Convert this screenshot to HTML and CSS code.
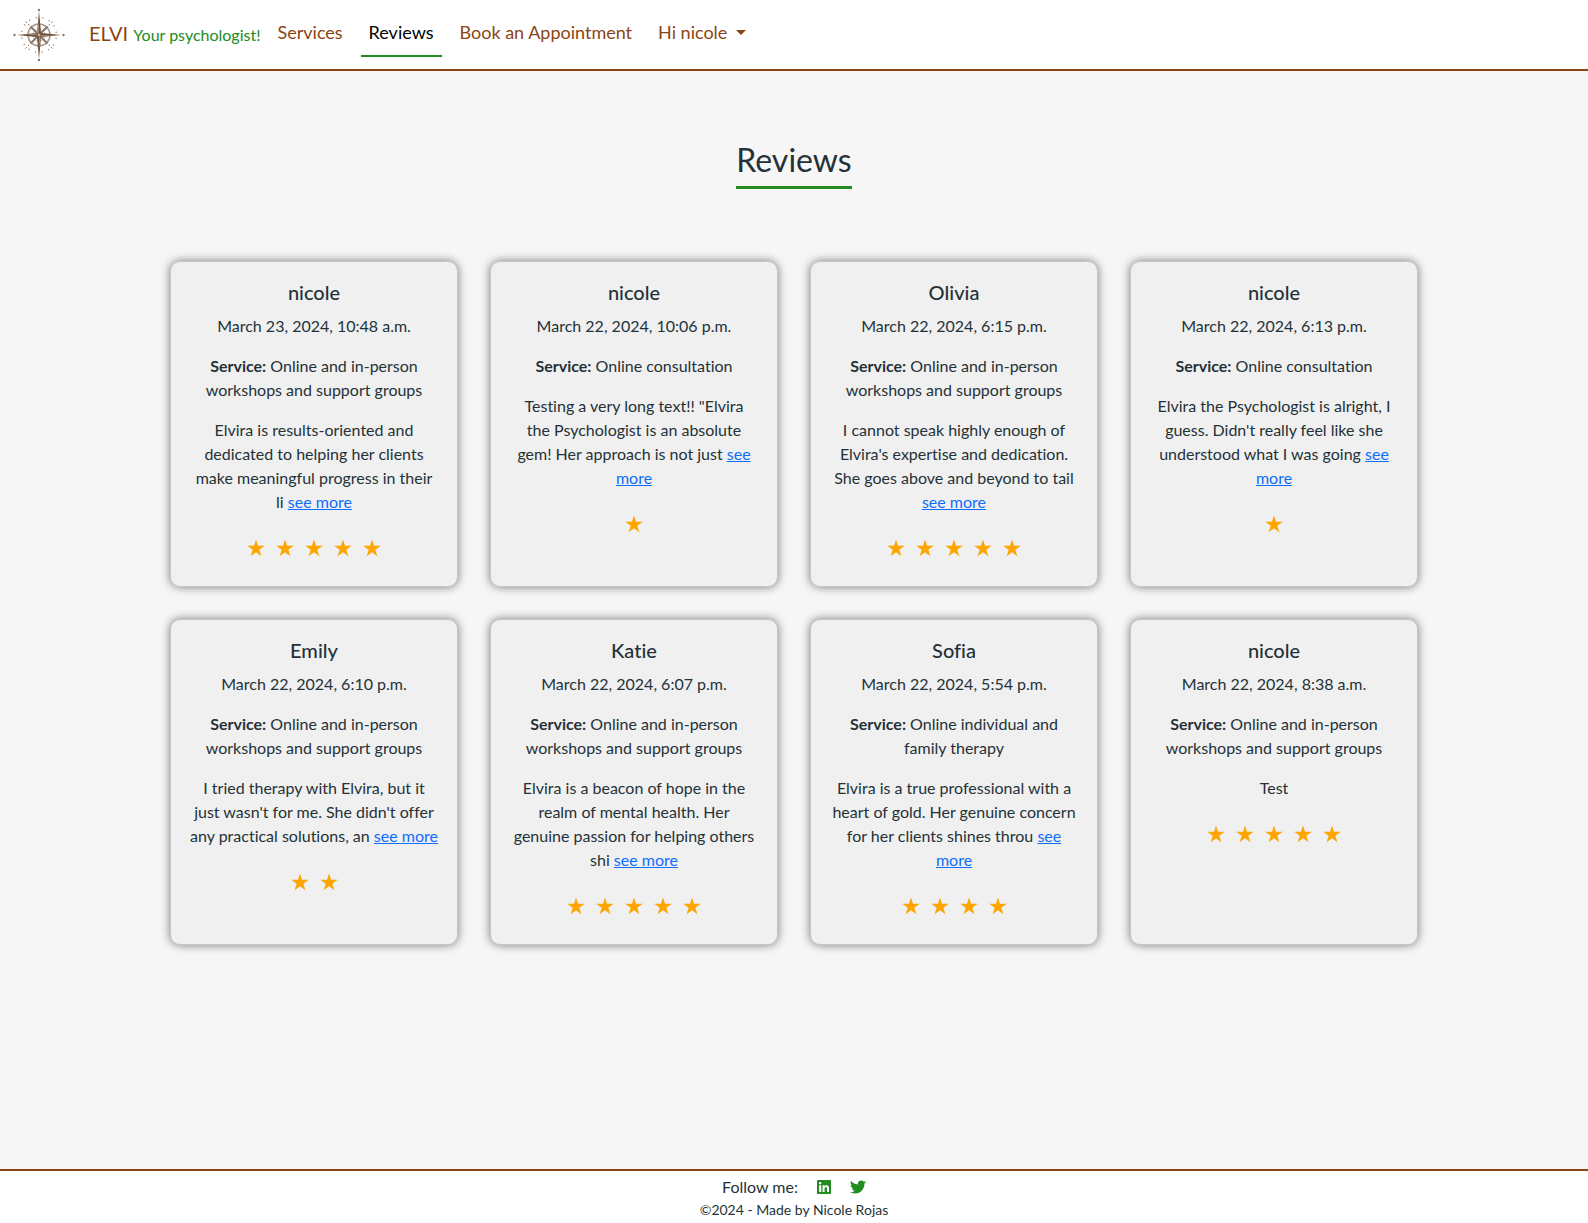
FILE: index.html
```html
<!DOCTYPE html>
<html lang="en">
<head>
<meta charset="utf-8">
<meta name="viewport" content="width=device-width, initial-scale=1">
<title>Elvi - Reviews</title>
<link rel="stylesheet" href="styles.css">
</head>
<body>
<svg width="0" height="0" class="sprite" aria-hidden="true">
  <symbol id="star" viewBox="0 0 18 18"><path fill="currentColor" d="M9 0.5 11 6.7H17.7L12.3 10.7 14.4 17.2 9 13.2 3.6 17.2 5.7 10.7 0.3 6.7H7Z"/></symbol>
</svg>
<header class="header">
  <a class="logo" href="#" aria-label="Home">
    <svg viewBox="0 0 56 56" width="56" height="56" aria-hidden="true">
      <g fill="none" stroke="#8a7464">
        <circle cx="28" cy="28" r="11" stroke-width="1.6" stroke="#a89a8e"/>
        <circle cx="28" cy="28" r="6" stroke-width="0.8" stroke="#b5a99f"/>
        <circle cx="28" cy="28" r="17.5" stroke-width="1.6" stroke-dasharray="1.2 5.67" stroke-dashoffset="4" stroke="#a89a8e"/>
        <path stroke-width="1.8" d="M19.5 19.5 36.5 36.5M36.5 19.5 19.5 36.5"/>
        <path stroke-width="1" stroke-dasharray="2 1.5" d="M14.5 14.5 19 19M41.5 14.5 37 19M14.5 41.5 19 37M41.5 41.5 37 37"/>
      </g>
      <path fill="#6f4e37" d="M28 4 30 26 50 28 30 30 28 52 26 30 6 28 26 26Z"/>
      <path fill="#c9bdb3" d="M27.6 13V26.2L26.500 26ZM43 28.4H29.8L30 29.300ZM28.4 43V29.8L29.300 30ZM13 27.6H26.2L26 26.700Z"/>
      <g fill="#8a7464"><circle cx="28" cy="3" r="1.2"/><circle cx="28" cy="53" r="1.2"/><circle cx="3.500" cy="28" r="1.2"/><circle cx="52.500" cy="28" r="1.200"/><circle cx="28" cy="28" r="2"/></g>
      <circle cx="28" cy="28" r="0.8" fill="#fff"/>
    </svg>
  </a>
  <a class="brand" href="#">ELVI <span class="tagline">Your psychologist!</span></a>
  <nav class="nav">
    <a class="nav-link" href="#">Services</a>
    <a class="nav-link active" href="#" aria-current="page">Reviews</a>
    <a class="nav-link" href="#">Book an Appointment</a>
    <button class="nav-link dropdown" type="button">Hi nicole</button>
  </nav>
</header>
<main class="main">
  <h1 class="title">Reviews</h1>
  <div class="cards">
    <article class="card">
      <h2 class="name">nicole</h2>
      <p>March 23, 2024, 10:48 a.m.</p>
      <p><strong>Service:</strong> Online and in-person workshops and support groups</p>
      <p>Elvira is results-oriented and dedicated to helping her clients make meaningful progress in their li&nbsp;<a href="#">see more</a></p>
      <div class="stars" role="img" aria-label="5 stars"><svg><use href="#star"/></svg><svg><use href="#star"/></svg><svg><use href="#star"/></svg><svg><use href="#star"/></svg><svg><use href="#star"/></svg></div>
    </article>
    <article class="card">
      <h2 class="name">nicole</h2>
      <p>March 22, 2024, 10:06 p.m.</p>
      <p><strong>Service:</strong> Online consultation</p>
      <p>Testing a very long text!! "Elvira the&nbsp;Psychologist is an absolute gem! Her approach is not just <a href="#">see more</a></p>
      <div class="stars" role="img" aria-label="1 star"><svg><use href="#star"/></svg></div>
    </article>
    <article class="card">
      <h2 class="name">Olivia</h2>
      <p>March 22, 2024, 6:15 p.m.</p>
      <p><strong>Service:</strong> Online and in-person workshops and support groups</p>
      <p>I cannot speak highly enough of Elvira's expertise and dedication. She goes above and beyond to tail <a href="#">see more</a></p>
      <div class="stars" role="img" aria-label="5 stars"><svg><use href="#star"/></svg><svg><use href="#star"/></svg><svg><use href="#star"/></svg><svg><use href="#star"/></svg><svg><use href="#star"/></svg></div>
    </article>
    <article class="card">
      <h2 class="name">nicole</h2>
      <p>March 22, 2024, 6:13 p.m.</p>
      <p><strong>Service:</strong> Online consultation</p>
      <p>Elvira the Psychologist is alright, I guess. Didn't really feel like she understood what I was going <a href="#">see more</a></p>
      <div class="stars" role="img" aria-label="1 star"><svg><use href="#star"/></svg></div>
    </article>
    <article class="card">
      <h2 class="name">Emily</h2>
      <p>March 22, 2024, 6:10 p.m.</p>
      <p><strong>Service:</strong> Online and in-person workshops and support groups</p>
      <p>I tried therapy with Elvira, but it just wasn't for me. She didn't offer any practical solutions, an <a href="#">see more</a></p>
      <div class="stars" role="img" aria-label="2 stars"><svg><use href="#star"/></svg><svg><use href="#star"/></svg></div>
    </article>
    <article class="card">
      <h2 class="name">Katie</h2>
      <p>March 22, 2024, 6:07 p.m.</p>
      <p><strong>Service:</strong> Online and in-person workshops and support groups</p>
      <p>Elvira is a beacon of hope in the realm of mental health. Her genuine passion for helping others shi <a href="#">see more</a></p>
      <div class="stars" role="img" aria-label="5 stars"><svg><use href="#star"/></svg><svg><use href="#star"/></svg><svg><use href="#star"/></svg><svg><use href="#star"/></svg><svg><use href="#star"/></svg></div>
    </article>
    <article class="card">
      <h2 class="name">Sofia</h2>
      <p>March 22, 2024, 5:54 p.m.</p>
      <p><strong>Service:</strong> Online individual and family therapy</p>
      <p>Elvira is a true professional with a heart of gold. Her genuine concern for her clients shines throu <a href="#">see more</a></p>
      <div class="stars" role="img" aria-label="4 stars"><svg><use href="#star"/></svg><svg><use href="#star"/></svg><svg><use href="#star"/></svg><svg><use href="#star"/></svg></div>
    </article>
    <article class="card">
      <h2 class="name">nicole</h2>
      <p>March 22, 2024, 8:38 a.m.</p>
      <p><strong>Service:</strong> Online and in-person workshops and support groups</p>
      <p>Test</p>
      <div class="stars" role="img" aria-label="5 stars"><svg><use href="#star"/></svg><svg><use href="#star"/></svg><svg><use href="#star"/></svg><svg><use href="#star"/></svg><svg><use href="#star"/></svg></div>
    </article>
  </div>
</main>
<footer class="footer">
  <div class="follow">
    <span>Follow me:</span>
    <a href="#" aria-label="LinkedIn"><svg viewBox="0 0 448 512" width="14" height="16"><path fill="currentColor" d="M416 32H31.900C14.300 32 0 46.500 0 64.300v383.400C0 465.500 14.300 480 31.900 480H416c17.600 0 32-14.500 32-32.300V64.300c0-17.800-14.400-32.300-32-32.300zM135.400 416H69V202.200h66.500V416zm-33.200-243c-21.300 0-38.500-17.300-38.500-38.500S80.900 96 102.200 96c21.200 0 38.500 17.300 38.500 38.500 0 21.300-17.200 38.500-38.500 38.500zm282.100 243h-66.400V312c0-24.800-.5-56.700-34.500-56.700-34.600 0-39.900 27-39.900 54.900V416h-66.400V202.200h63.700v29.200h.9c8.900-16.800 30.600-34.500 62.900-34.500 67.200 0 79.700 44.300 79.700 101.900V416z"/></svg></a>
    <a href="#" aria-label="Twitter"><svg viewBox="0 0 512 512" width="16" height="16"><path fill="currentColor" d="M459.370 151.716c.325 4.548.325 9.097.325 13.645 0 138.720-105.583 298.558-298.558 298.558-59.452 0-114.680-17.219-161.137-47.106 8.447.974 16.568 1.299 25.340 1.299 49.055 0 94.213-16.568 130.274-44.832-46.132-.975-84.792-31.188-98.112-72.772 6.498.974 12.995 1.624 19.818 1.624 9.421 0 18.843-1.300 27.614-3.573-48.081-9.747-84.143-51.980-84.143-102.985v-1.299c13.969 7.797 30.214 12.670 47.431 13.319-28.264-18.843-46.781-51.005-46.781-87.391 0-19.492 5.197-37.360 14.294-52.954 51.655 63.675 129.300 105.258 216.365 109.807-1.624-7.797-2.599-15.918-2.599-24.040 0-57.828 46.782-104.934 104.934-104.934 30.213 0 57.502 12.670 76.670 33.137 23.715-4.548 46.456-13.320 66.599-25.340-7.798 24.366-24.366 44.833-46.132 57.827 21.117-2.273 41.584-8.122 60.426-16.243-14.292 20.791-32.161 39.308-52.628 54.253z"/></svg></a>
  </div>
  <p class="copyright">©2024 - Made by Nicole Rojas</p>
</footer>
</body>
</html>
```

FILE: styles.css
```css
* { box-sizing: border-box; }

body {
  margin: 0;
  min-height: 100vh;
  display: flex;
  flex-direction: column;
  background: #f6f6f6;
  color: #243238;
  font: 16px/24px Lato, sans-serif;
  font-variant-ligatures: none;
}

h1, h2, p { margin: 0; }

.sprite { position: absolute; }

.header {
  display: flex;
  align-items: center;
  padding: 7px 11px 6px;
  background: #fff;
  border-bottom: 2px solid #8b4513;
}

.logo { display: flex; margin-right: 22px; }

.brand {
  margin-right: 9px;
  padding-bottom: 2px;
  font-size: 20px;
  color: #8b4513;
  text-decoration: none;
}

.tagline { font-size: 16px; color: #228b22; }

.nav { display: flex; gap: 10px; }

.nav-link {
  padding: 7px 8px 11px;
  border: 0;
  border-bottom: 2px solid transparent;
  background: none;
  font: 18px/24px Lato, sans-serif;
  color: #8b4513;
  text-decoration: none;
}

.nav-link.active { color: #000; border-bottom-color: #228b22; }

.dropdown { display: flex; align-items: center; gap: 9px; }

.dropdown::after {
  content: "";
  border: 5px solid transparent;
  border-top-color: currentColor;
  border-bottom: 0;
}

.main {
  flex: 1;
  display: flex;
  flex-direction: column;
  align-items: center;
  gap: 72px;
  padding: 69px 16px 72px;
}

.title {
  padding-bottom: 6px;
  border-bottom: 3px solid #228b22;
  font-size: 32px;
  line-height: 40px;
  font-weight: 400;
}

.cards {
  display: grid;
  grid-template-columns: repeat(auto-fit, 288px);
  justify-content: center;
  gap: 32px;
  width: 100%;
  max-width: 1248px;
}

.card {
  display: flex;
  flex-direction: column;
  gap: 16px;
  padding: 20px 18px;
  border: 1px solid #c6c6c6;
  border-radius: 10px;
  background: #f0f0f0;
  box-shadow: 0 0 10px rgba(0, 0, 0, 0.5);
  text-align: center;
}

.name {
  margin-bottom: -4px;
  font-size: 20px;
  line-height: 20px;
  font-weight: 500;
}

.card strong { font-weight: 700; }

.card a { color: #0d6efd; }

.stars {
  display: flex;
  justify-content: center;
  align-items: center;
  gap: 11px;
  height: 36px;
  color: #ffa500;
}

.stars svg { width: 18px; height: 18px; }

.footer {
  padding: 4px 16px 2px;
  border-top: 2px solid #8b4513;
  background: #fff;
  text-align: center;
}

.follow {
  display: flex;
  justify-content: center;
  align-items: center;
  gap: 19px;
}

.follow a { display: flex; color: #228b22; }

.copyright { font-size: 14px; line-height: 22px; }
```
